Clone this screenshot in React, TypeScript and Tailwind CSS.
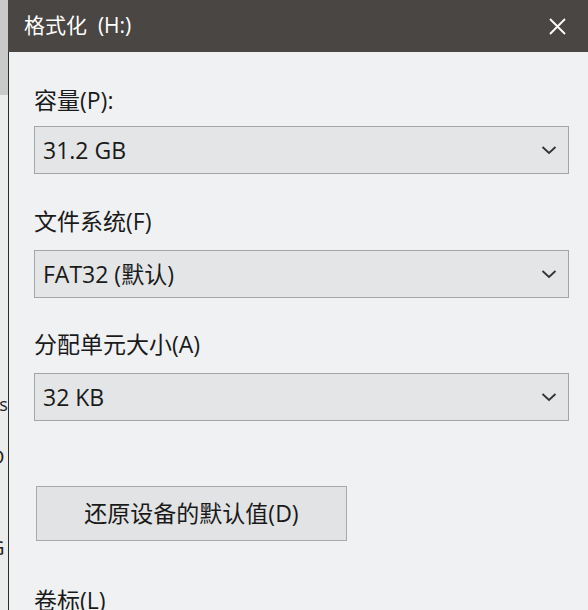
import React from "react";

const font = { fontFamily: '"Open Sans", "Noto Sans CJK SC", sans-serif' };

function Chevron() {
  return (
    <svg width="16" height="10" viewBox="0 0 16 10" className="shrink-0">
      <path d="M1.5 2 L8 8 L14.5 2" fill="none" stroke="#333" strokeWidth="1.8" />
    </svg>
  );
}

function Select({ value }: { value: string }) {
  return (
    <div className="flex h-[48px] items-center justify-between border border-[#a3a5a7] bg-[#e4e5e6] pl-[8px] pr-[11px] text-[23px] text-[#1a1a1a]">
      <span>{value}</span>
      <Chevron />
    </div>
  );
}

export default function App() {
  return (
    <div className="flex h-[610px] w-[588px] overflow-hidden bg-[#f0f1f2]" style={font}>
      <div className="relative flex w-[8px] flex-col overflow-hidden bg-[#ececec]">
        <div className="h-[95px] w-full bg-[#c9c9c9]" />
        <div className="relative flex-1">
          <span className="absolute left-[-8px] top-[300px] text-[18px] leading-none text-[#222]">rs</span>
          <span className="absolute left-[-10px] top-[352px] text-[20px] leading-none text-[#222]">D</span>
          <span className="absolute left-[-10px] top-[443px] text-[20px] leading-none text-[#222]">G</span>
        </div>
      </div>
      <div className="flex flex-1 flex-col">
        <div className="flex h-[52px] shrink-0 items-center justify-between bg-[#4a4643] pl-[16px] pr-[22px] text-white">
          <span className="text-[21px]">格式化&nbsp;&nbsp;(H:)</span>
          <svg width="17" height="17" viewBox="0 0 17 17">
            <path d="M1 1 L16 16 M16 1 L1 16" stroke="#fff" strokeWidth="1.8" fill="none" />
          </svg>
        </div>
        <div className="flex flex-1 border-l border-[#2c2c2c] bg-[#f0f1f3]">
          <div className="flex flex-1 flex-col pl-[25px] pr-[19px] pt-[33px] text-[#1a1a1a]">
            <div className="text-[23px] leading-[30px]">容量(P):</div>
            <div className="mt-[11px]">
              <Select value="31.2 GB" />
            </div>
            <div className="mt-[32px] text-[23px] leading-[30px]">文件系统(F)</div>
            <div className="mt-[14px]">
              <Select value="FAT32 (默认)" />
            </div>
            <div className="mt-[31px] text-[23px] leading-[30px]">分配单元大小(A)</div>
            <div className="mt-[14px]">
              <Select value="32 KB" />
            </div>
            <div className="mt-[65px] flex">
              <div className="ml-[2px] flex h-[55px] w-[311px] items-center justify-center border border-[#a8a9aa] bg-[#e2e3e4] text-[23px]">
                还原设备的默认值(D)
              </div>
            </div>
            <div className="mt-[44px] text-[23px] leading-[30px]">卷标(L)</div>
          </div>
        </div>
      </div>
    </div>
  );
}
